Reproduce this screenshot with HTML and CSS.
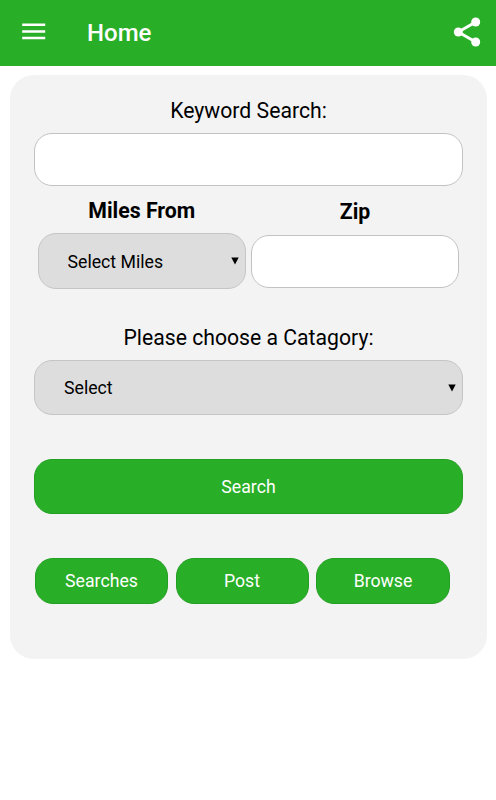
FILE: index.html
```html
<!DOCTYPE html>
<html lang="en">
<head>
<meta charset="utf-8">
<title>Home</title>
<link rel="stylesheet" href="styles.css">
</head>
<body>
<header class="bar">
  <svg class="menu-icon" width="24" height="18" viewBox="0 0 24 18" fill="currentColor"><path d="M.2.6h23v2.5H.2zM.2 7.2h23v2.5H.2zM.2 13.8h23v2.5H.2z"/></svg>
  <h1 class="title">Home</h1>
  <svg class="share-icon" width="28" height="30" viewBox="0 0 28 30"><path d="M22.7 5 5.3 15l17.4 10" fill="none" stroke="currentColor" stroke-width="3"/><g fill="currentColor"><circle cx="22.7" cy="5" r="4.5"/><circle cx="5.3" cy="15" r="4.5"/><circle cx="22.7" cy="25" r="4.5"/></g></svg>
</header>
<main class="card">
  <label class="label" for="keyword">Keyword Search:</label>
  <input class="field" id="keyword" type="text">
  <div class="row">
    <div class="col">
      <label class="label strong" for="miles">Miles From</label>
      <div class="select-wrap">
        <select class="select miles" id="miles"><option>Select Miles</option></select>
        <svg class="arrow" width="8" height="8" viewBox="0 0 8 8"><path d="M.3.5h7.4L4 7.5z"/></svg>
      </div>
    </div>
    <div class="col zip">
      <label class="label strong" for="zip">Zip</label>
      <input class="field" id="zip" type="text">
    </div>
  </div>
  <label class="label category-label" for="category">Please choose a Catagory:</label>
  <div class="select-wrap">
    <select class="select" id="category"><option>Select</option></select>
    <svg class="arrow" width="8" height="8" viewBox="0 0 8 8"><path d="M.3.5h7.4L4 7.5z"/></svg>
  </div>
  <button class="button search">Search</button>
  <nav class="actions">
    <button class="button">Searches</button>
    <button class="button">Post</button>
    <button class="button">Browse</button>
  </nav>
</main>
</body>
</html>
```
FILE: styles.css
```css
* { box-sizing: border-box; }
body { margin: 0; background: #fff; color: #000; font-family: Roboto, sans-serif; }
.bar { display: flex; align-items: center; height: 66px; padding: 0 15px 2px 22px; background: #29ae27; color: #fff; }
.title { margin: 2px 0 0 41px; font-size: 24px; line-height: 28px; font-weight: 500; }
.share-icon { margin-left: auto; }
.card { width: 477px; height: 584px; margin: 9px 0 0 10px; padding: 22px 24px 0; border-radius: 24px; background: #f3f3f3; }
.label { display: block; height: 28px; font-size: 21.2px; line-height: 28px; text-align: center; }
.strong { font-size: 21.3px; font-weight: 700; }
.field { display: block; width: 100%; height: 53px; margin: 8px 0 0; padding: 0 20px; border: 1px solid #c2c2c2; border-radius: 18px; background: #fff; font: 17.7px Roboto, sans-serif; }
.row { display: grid; grid-template-columns: 208.5px 208px; column-gap: 5px; margin: 11px 0 0 3.5px; }
.zip { padding-top: 1px; }
.zip .field { margin-top: 9px; }
.select-wrap { position: relative; margin-top: 8px; }
.select { display: block; width: 100%; height: 55px; padding: 0 29px; appearance: none; border: 1px solid #c5c5c5; border-radius: 18px; background: #ddd; color: #000; font: 17.7px Roboto, sans-serif; }
.miles { height: 56px; padding-top: 2px; }
.arrow { position: absolute; right: 7px; top: 24px; }
.category-label { margin-top: 35px; }
.button { height: 46px; padding: 0; border: 1px solid #239f22; border-radius: 18px; background: #29ae27; color: #fff; font: 17.7px Roboto, sans-serif; }
.search { display: block; width: 100%; height: 55px; margin-top: 44px; }
.actions { display: grid; grid-template-columns: 133px 133px 134px; column-gap: 7.5px; margin: 44px 0 0 1px; }
```
